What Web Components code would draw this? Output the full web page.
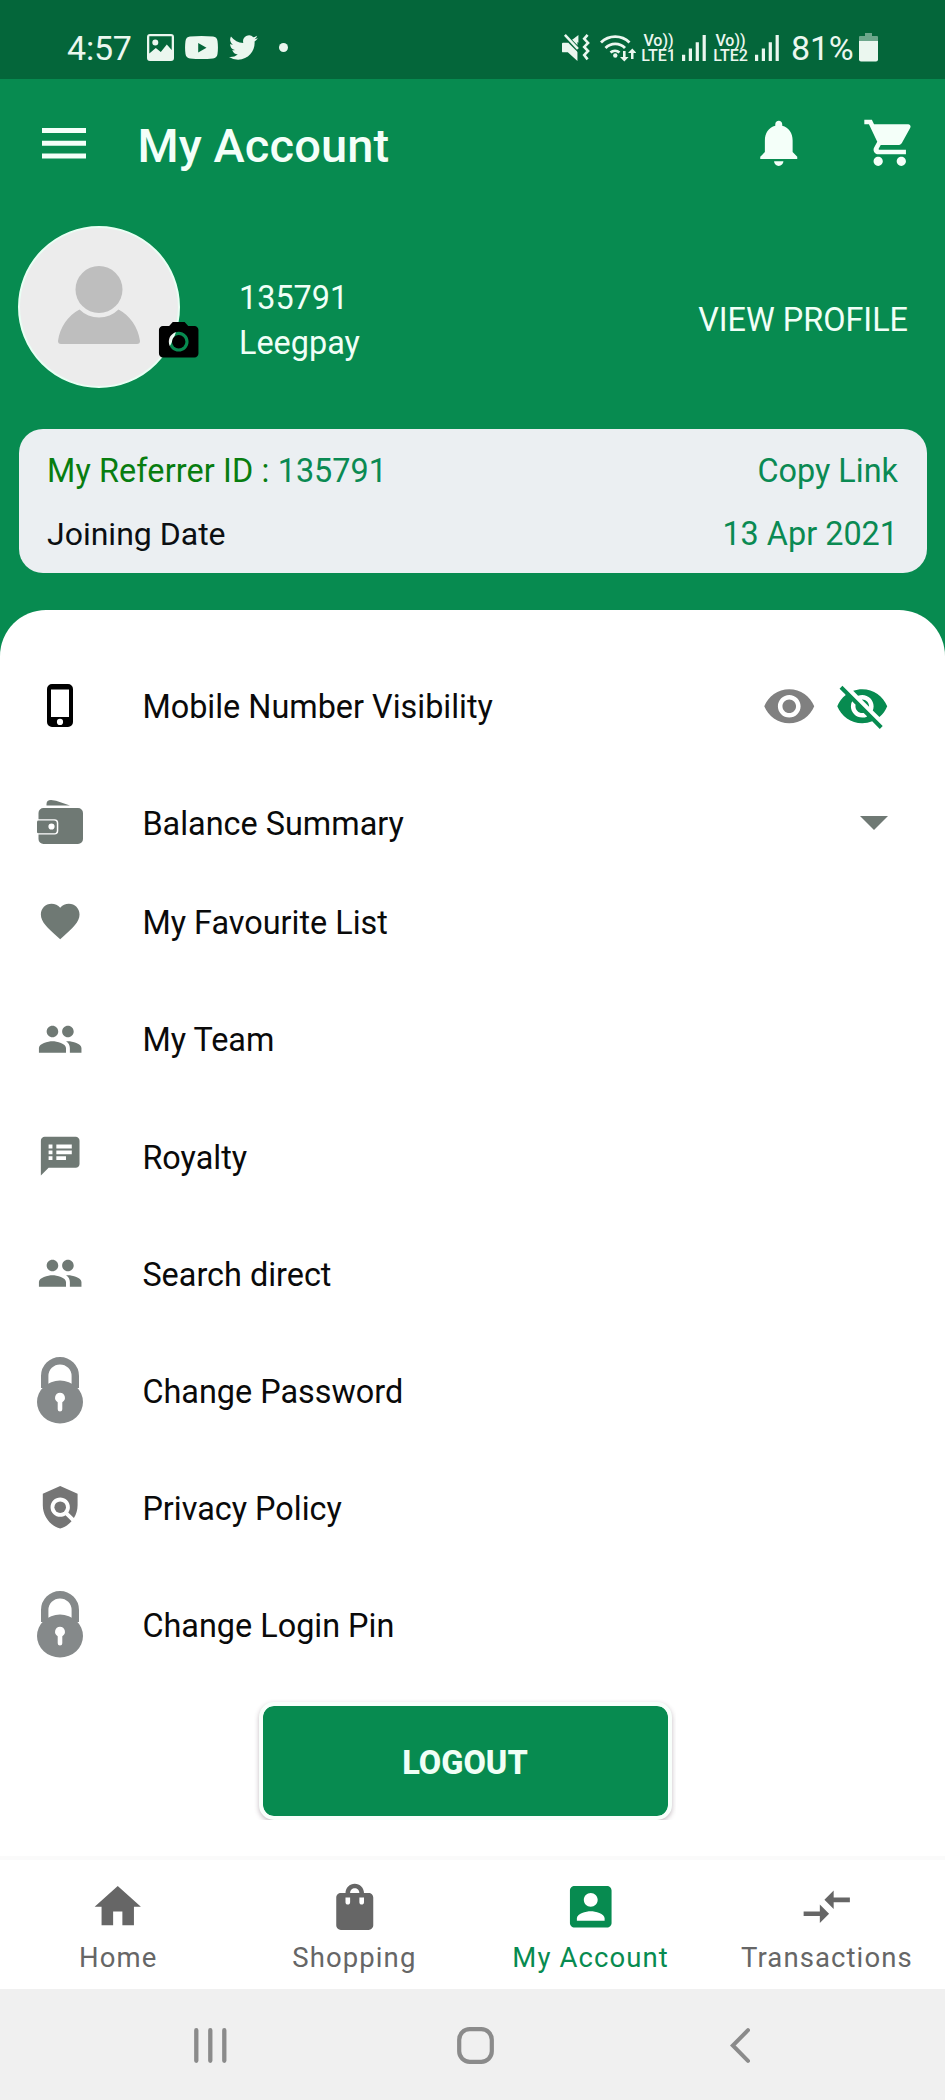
<!DOCTYPE html>
<html lang="en">
<head>
<meta charset="utf-8">
<meta name="viewport" content="width=device-width, initial-scale=1">
<title>My Account</title>
<style>
    html, body {
        margin: 0;
        padding: 0;
    }
    body {
        width: 945px;
        height: 2100px;
        overflow: hidden;
        background: #fff;
        font-family: Roboto, "Liberation Sans", sans-serif;
        --green: #078b50;
        --grey: #6f7974;
    }
</style>
</head>
<body>
<account-screen></account-screen>

<script>
(function() {
    // Material icons use a 24x24 viewBox, the rest carry their own
    const ICONS = {
        bell: ['0 0 24 24', '<path d="M12 22c1.1 0 2-.9 2-2h-4c0 1.1.89 2 2 2zm6-6v-5c0-3.07-1.64-5.64-4.5-6.32V4c0-.83-.67-1.5-1.5-1.5s-1.5.67-1.5 1.5v.68C7.63 5.36 6 7.92 6 11v5l-2 2v1h16v-1l-2-2z"/>'],
        cart: ['0 0 24 24', '<path d="M7 18c-1.1 0-1.99.9-1.99 2S5.9 22 7 22s2-.9 2-2-.9-2-2-2zM1 2v2h2l3.6 7.59-1.35 2.45c-.16.28-.25.61-.25.96 0 1.1.9 2 2 2h12v-2H7.42c-.14 0-.25-.11-.25-.25l.03-.12.9-1.63h7.45c.75 0 1.41-.41 1.75-1.03l3.58-6.49c.08-.14.12-.31.12-.48 0-.55-.45-1-1-1H5.21l-.94-2H1zm16 16c-1.1 0-1.99.9-1.99 2s.89 2 1.99 2 2-.9 2-2-.9-2-2-2z"/>'],
        burger: ['0 0 44 31', '<path d="M0 0h44v5H0zM0 12.7h44v5H0zM0 25.4h44v5H0z"/>'],
        camera: ['0 0 24 24', '<circle cx="12" cy="12" r="3.4"/><path d="M9 2 7.17 4H4c-1.1 0-2 .9-2 2v12c0 1.1.9 2 2 2h16c1.1 0 2-.9 2-2V6c0-1.1-.9-2-2-2h-3.17L15 2H9zm3 15c-2.76 0-5-2.24-5-5s2.24-5 5-5 5 2.24 5 5-2.24 5-5 5z"/>'],
        phone: ['0 0 26 43', '<path fill-rule="evenodd" d="M5 0h16a5 5 0 0 1 5 5v33a5 5 0 0 1-5 5H5a5 5 0 0 1-5-5V5a5 5 0 0 1 5-5zM4 5.5v27.5h18V5.5zM13 34.8a3.1 3.1 0 1 0 0 6.2 3.1 3.1 0 0 0 0-6.2z"/>'],
        wallet: ['0 0 46 44', '<path d="M9.5 5.5V4Q9.5 0 14 0L19 .8 33 5.5z"/><path fill-rule="evenodd" d="M6.5 8H41a5 5 0 0 1 5 5v26a5 5 0 0 1-5 5H6.5a5 5 0 0 1-5-5V34.5H17.5a3.8 3.8 0 0 0 3.8-3.8V23a3.8 3.8 0 0 0-3.8-3.8H1.5V13a5 5 0 0 1 5-5z"/><path fill-rule="evenodd" d="M1.5 20.6H17a2.8 2.8 0 0 1 2.8 2.8v7a2.8 2.8 0 0 1-2.8 2.8H1.5A1.5 1.5 0 0 1 0 31.5V22a1.5 1.5 0 0 1 1.5-1.4zM14.5 23.4a3.1 3.1 0 1 0 0 6.2 3.1 3.1 0 0 0 0-6.2z"/>'],
        heart: ['0 0 24 24', '<path d="m12 21.35-1.45-1.32C5.4 15.36 2 12.28 2 8.5 2 5.42 4.42 3 7.5 3c1.74 0 3.41.81 4.5 2.09C13.09 3.81 14.76 3 16.5 3 19.58 3 22 5.42 22 8.5c0 3.78-3.4 6.86-8.55 11.54L12 21.35z"/>'],
        people: ['0 0 24 24', '<path d="M16 11c1.66 0 2.99-1.34 2.99-3S17.66 5 16 5s-3 1.34-3 3 1.34 3 3 3zm-8 0c1.66 0 2.99-1.34 2.99-3S9.66 5 8 5 5 6.34 5 8s1.34 3 3 3zm0 2c-2.33 0-7 1.17-7 3.5V19h14v-2.5c0-2.33-4.67-3.5-7-3.5zm8 0c-.29 0-.62.02-.97.05 1.16.84 1.97 1.97 1.97 3.45V19h6v-2.5c0-2.33-4.67-3.5-7-3.5z"/>'],
        notes: ['0 0 24 24', '<path d="M20 2H4c-1.1 0-1.99.9-1.99 2L2 22l4-4h14c1.1 0 2-.9 2-2V4c0-1.1-.9-2-2-2zM8 14H6v-2h2v2zm0-3H6V9h2v2zm0-3H6V6h2v2zm7 6H10v-2h5v2zm3-3h-8V9h8v2zm0-3h-8V6h8v2z"/>'],
        lock: ['0 0 46 66.5', '<path d="M7.7 31V19a15.3 15.3 0 0 1 30.6 0v12" fill="none" stroke="currentColor" stroke-width="7.4"/><path fill-rule="evenodd" d="M23 23.5a23 21.5 0 1 0 0 43 23 21.5 0 0 0 0-43zm0 12.3a5 5 0 0 1 2.3 9.4v7a2.3 2.3 0 0 1-4.6 0v-7A5 5 0 0 1 23 35.8z"/>'],
        policy: ['0 0 24 24', '<path d="m21 5-9-4-9 4v6c0 5.55 3.84 10.74 9 12 2.3-.56 4.33-1.9 5.88-3.71l-3.12-3.12c-1.94 1.29-4.58 1.07-6.29-.64-1.95-1.95-1.95-5.12 0-7.07 1.95-1.95 5.12-1.95 7.07 0 1.71 1.71 1.92 4.35.64 6.29l2.9 2.9C20.29 15.69 21 13.38 21 11V5z"/><circle cx="12" cy="12" r="3"/>'],
        eye: ['0 0 24 24', '<path d="M12 4.5C7 4.5 2.73 7.61 1 12c1.73 4.39 6 7.5 11 7.5s9.27-3.11 11-7.5c-1.73-4.39-6-7.5-11-7.5zM12 17c-2.76 0-5-2.24-5-5s2.24-5 5-5 5 2.24 5 5-2.24 5-5 5zm0-8c-1.66 0-3 1.34-3 3s1.34 3 3 3 3-1.34 3-3-1.34-3-3-3z"/>'],
        'eye-off': ['0 0 24 24', '<path d="M12 7c2.76 0 5 2.24 5 5 0 .65-.13 1.26-.36 1.83l2.92 2.92c1.51-1.26 2.7-2.89 3.43-4.75-1.73-4.39-6-7.5-11-7.5-1.4 0-2.74.25-3.98.7l2.16 2.16C10.74 7.13 11.35 7 12 7zM2 4.27l2.28 2.28.46.46C3.08 8.3 1.78 10.02 1 12c1.73 4.39 6 7.5 11 7.5 1.55 0 3.03-.3 4.38-.84l.42.42L19.73 22 21 20.73 3.27 3 2 4.27zM7.53 9.8l1.55 1.55c-.05.21-.08.43-.08.65 0 1.66 1.34 3 3 3 .22 0 .44-.03.65-.08l1.55 1.55c-.67.33-1.41.53-2.2.53-2.76 0-5-2.24-5-5 0-.79.2-1.53.53-2.2zm4.31-.78 3.15 3.15.02-.16c0-1.66-1.34-3-3-3l-.17.01z"/>'],
        caret: ['0 0 28 14', '<path d="M0 0h28L14 14z"/>'],
        home: ['0 0 24 24', '<path d="M10 20v-6h4v6h5v-8h3L12 3 2 12h3v8z"/>'],
        bag: ['0 0 24 24', '<path d="M18 6h-2c0-2.21-1.79-4-4-4S8 3.79 8 6H6c-1.1 0-2 .9-2 2v12c0 1.1.9 2 2 2h12c1.1 0 2-.9 2-2V8c0-1.1-.9-2-2-2zm-8 4c0 .55-.45 1-1 1s-1-.45-1-1V8h2v2zm2-6c1.1 0 2 .9 2 2h-4c0-1.1.9-2 2-2zm4 6c0 .55-.45 1-1 1s-1-.45-1-1V8h2v2z"/>'],
        account: ['0 0 24 24', '<path d="M3 5v14c0 1.1.89 2 2 2h14c1.1 0 2-.9 2-2V5c0-1.1-.9-2-2-2H5c-1.11 0-2 .9-2 2zm12 4c0 1.66-1.34 3-3 3s-3-1.34-3-3 1.34-3 3-3 3 1.34 3 3zm-9 8c0-2 4-3.1 6-3.1s6 1.1 6 3.1v1H6v-1z"/>'],
        arrows: ['0 0 24 24', '<path d="M9.01 14H2v2h7.01v3L13 15l-3.99-4v3zm5.98-1v-3H22V8h-7.01V5L11 9l3.99 4z"/>'],
        image: ['0 0 27 27', '<path fill-rule="evenodd" d="M3 0h21a3 3 0 0 1 3 3v21a3 3 0 0 1-3 3H3a3 3 0 0 1-3-3V3a3 3 0 0 1 3-3zM2.3 2.3v17.2l6.5-5.5 5 4 6-7.5 4.9 5.5V2.3zM8.3 5.5a3 3 0 1 1 0 6 3 3 0 0 1 0-6z"/>'],
        youtube: ['0 0 33 23', '<path fill-rule="evenodd" d="M5 .6Q16.5-.6 28 .6q4 .4 4.5 4.4.9 6.5 0 13-.5 4-4.5 4.4-11.5 1.2-23 0-4-.4-4.5-4.4-.9-6.5 0-13Q1 1 5 .6zM13.2 7v9.4l8.3-4.7z"/>'],
        twitter: ['0 0 24 20', '<path d="M23.95 2.6a10 10 0 0 1-2.82.77 4.96 4.96 0 0 0 2.16-2.72c-.95.55-2 .96-3.13 1.18a4.92 4.92 0 0 0-8.38 4.48A13.93 13.93 0 0 1 1.64 1.16a4.92 4.92 0 0 0 1.52 6.57 4.9 4.9 0 0 1-2.23-.61v.06a4.92 4.92 0 0 0 3.95 4.83 5 5 0 0 1-2.21.08 4.94 4.94 0 0 0 4.6 3.42A9.87 9.87 0 0 1 0 17.54a13.99 13.99 0 0 0 7.55 2.21c9.14 0 14.3-7.72 13.6-14.5a10 10 0 0 0 2.8-2.65z"/>'],
        mute: ['0 0 29 29', '<path d="M1 9h5l10-7v26L6 19H1a1 1 0 0 1-1-1v-8a1 1 0 0 1 1-1zM12 5l5-4v8z"/><path d="M2 1l17 17" stroke="#04663a" stroke-width="5"/><path d="M3 1l13.5 14.5" stroke="currentColor" stroke-width="2.6"/><path d="M26.5 1l-3.5 4 4 4.2-4 4.2 4 4.2-4 4.2 3.5 4.5" fill="none" stroke="currentColor" stroke-width="2.7"/>'],
        wifi: ['0 0 36 28', '<g fill="none" stroke="currentColor" stroke-width="2.8"><path d="M1 8.5a20 20 0 0 1 28.5 0M5.5 14a13.5 13.5 0 0 1 19.5 0M10.5 18.5a7 7 0 0 1 9 0"/></g><circle cx="15.3" cy="21.5" r="2.2"/><path d="M23 17h2.6v6h3l-4.3 4.5L20 23h3zM31 25V19h-3l4.3-4.5L36.5 19h-3v6z"/>'],
        signal: ['0 0 24 27', '<path d="M0 20.5h3.2V27H0zM6.8 14H10v13H6.8zM13.7 7.5h3.2V27h-3.2zM20.6 0h3.2v27h-3.2z"/>'],
        battery: ['0 0 19 29', '<path opacity=".45" d="M6 0h7v3h5a1 1 0 0 1 1 1v5H0V4a1 1 0 0 1 1-1h5z"/><path d="M0 8h19v18.5a2 2 0 0 1-2 2H2a2 2 0 0 1-2-2z"/>'],
        recents: ['0 0 33 35', '<path d="M2.3 2.2v30.6M16.3 2.2v30.6M30.3 2.2v30.6" stroke="currentColor" stroke-width="4.3" stroke-linecap="round"/>'],
        'nav-home': ['0 0 37 37', '<rect x="2.2" y="2.2" width="32.6" height="32.6" rx="10.5" fill="none" stroke="currentColor" stroke-width="4.2"/>'],
        back: ['0 0 20 35', '<path d="M18 2.2 2.8 17.5 18 32.8" fill="none" stroke="currentColor" stroke-width="4" stroke-linecap="round"/>'],
        person: ['0 0 82 78', '<circle cx="41" cy="23.5" r="23.5"/><path d="M21.5 43.5a27.5 27.5 0 0 0 39 0C72 49.5 80 61 82 75q0 3-3 3H3q-3 0-3-3C2 61 10 49.5 21.5 43.5z"/>']
    };

    // Small helper: define an element from its markup
    function define(name, html, init) {
        const template = document.createElement('template');
        template.innerHTML = html;

        window.customElements.define(name, class extends HTMLElement {
            constructor() {
                super();
                this.attachShadow({mode: 'open'});
                this.shadowRoot.appendChild(template.content.cloneNode(true));
            }

            connectedCallback() {
                if (init)
                    init.call(this, this.shadowRoot);
            }
        });
    }

    // <app-icon name w h>
    define('app-icon', `
        <style>
          :host {
            display: block;
            flex: none;
          }
          svg {
            display: block;
            width: 100%;
            height: 100%;
            fill: currentColor;
          }
        </style>
        <svg aria-hidden="true"></svg>
    `, function(root) {
        const icon = ICONS[this.getAttribute('name')];
        const svg = root.querySelector('svg');
        const w = this.getAttribute('w');
        svg.setAttribute('viewBox', icon[0]);
        svg.setAttribute('preserveAspectRatio', 'none');
        svg.innerHTML = icon[1];
        this.style.width = w + 'px';
        this.style.height = (this.getAttribute('h') || w) + 'px';
    });

    define('volte-badge', `
        <style>
          :host {
            display: block;
            width: 35px;
            font-size: 16px;
            line-height: 15px;
            font-weight: 500;
            text-align: center;
            white-space: nowrap;
          }
        </style>
        <div>Vo))</div>
        <div><slot></slot></div>
    `);

    define('status-bar', `
        <style>
          :host {
            display: flex;
            align-items: center;
            box-sizing: border-box;
            height: 79px;
            padding: 16px 67px 0 67px;
            background: #04663a;
            color: #ebf7ef;
            font-size: 34px;
            line-height: 40px;
          }
          .time {
            width: 80px;
            letter-spacing: -0.2px;
          }
          .left, .right {
            display: flex;
            align-items: center;
          }
          .right {
            margin-left: auto;
          }
          .dot {
            width: 9px;
            height: 9px;
            border-radius: 50%;
            background: currentColor;
            margin-left: 21px;
          }
          .percent {
            margin-left: 12px;
            width: 68px;
            letter-spacing: -0.2px;
            white-space: nowrap;
          }
        </style>
        <div class="left">
          <span class="time">4:57</span>
          <app-icon name="image" w="27"></app-icon>
          <app-icon name="youtube" w="33" h="23" style="margin-left:11px"></app-icon>
          <app-icon name="twitter" w="29" h="25" style="margin-left:11px"></app-icon>
          <span class="dot"></span>
        </div>
        <div class="right">
          <app-icon name="mute" w="28"></app-icon>
          <app-icon name="wifi" w="36" h="28" style="margin-left:10px"></app-icon>
          <volte-badge style="margin-left:5px">LTE1</volte-badge>
          <app-icon name="signal" w="24" h="26" style="margin-left:6px"></app-icon>
          <volte-badge style="margin-left:7px">LTE2</volte-badge>
          <app-icon name="signal" w="24" h="26" style="margin-left:7px"></app-icon>
          <span class="percent">81%</span>
          <app-icon name="battery" w="19" h="29"></app-icon>
        </div>
    `);

    define('app-header', `
        <style>
          :host {
            display: flex;
            align-items: center;
            height: 128px;
            padding: 0 28px 0 42px;
            color: #f4fff9;
          }
          h1 {
            flex: 1;
            margin: 5px 0 0 51.5px;
            font-size: 47px;
            line-height: 54px;
            font-weight: 500;
            letter-spacing: 0.1px;
          }
        </style>
        <app-icon name="burger" w="44" h="31"></app-icon>
        <h1><slot></slot></h1>
        <app-icon name="bell" w="55.5"></app-icon>
        <app-icon name="cart" w="55.5" style="margin-left:55.5px"></app-icon>
    `);

    define('user-avatar', `
        <style>
          :host {
            display: flex;
            justify-content: center;
            position: relative;
            box-sizing: border-box;
            width: 162px;
            height: 162px;
            padding-top: 38px;
            border: 2px solid #e9fff4;
            border-radius: 50%;
            background: #ececec;
            color: #bebebe;
          }
          /* camera badge lies over the circle's edge */
          .badge {
            position: absolute;
            left: 135px;
            top: 90px;
            color: #000;
          }
        </style>
        <app-icon name="person" w="82" h="78"></app-icon>
        <app-icon class="badge" name="camera" w="47.4"></app-icon>
    `);

    define('profile-summary', `
        <style>
          :host {
            display: flex;
            align-items: center;
            height: 162px;
            margin-top: 19px;
            padding: 0 37px 0 18px;
            color: #f0fff7;
            font-size: 32.4px;
          }
          .who {
            flex: 1;
            margin: 28px 0 0 59px;
            line-height: 44.7px;
          }
          .link {
            margin-top: 26px;
          }
        </style>
        <user-avatar></user-avatar>
        <div class="who">
          <div><slot name="id"></slot></div>
          <div><slot name="name"></slot></div>
        </div>
        <div class="link">VIEW PROFILE</div>
    `);

    define('referrer-card', `
        <style>
          :host {
            display: block;
            box-sizing: border-box;
            height: 144px;
            margin: 41px 18.5px 0;
            padding: 11px 28.5px 0 28.5px;
            border-radius: 24px;
            background: #ebeff2;
            color: #0a8a53;
            font-size: 32.4px;
          }
          .row {
            display: flex;
            justify-content: space-between;
            line-height: 63px;
          }
          .name {
            color: #087d10;
            letter-spacing: 0.12px;
          }
          .dark {
            color: #0b0f12;
            font-size: 32px;
          }
        </style>
        <div class="row">
          <span><span class="name">My Referrer ID : </span><slot name="id"></slot></span>
          <span>Copy Link</span>
        </div>
        <div class="row">
          <span class="dark">Joining Date</span>
          <slot name="date"></slot>
        </div>
    `);

    define('menu-item', `
        <style>
          :host {
            display: flex;
            align-items: center;
            height: 117.2px;
            padding-right: 57px;
            color: #0a0a0a;
            font-size: 32.4px;
          }
          .icon {
            display: flex;
            justify-content: center;
            width: 119.4px;
            margin-right: 23px;
            margin-top: -2px;
            color: var(--icon-color, var(--grey));
          }
          .label {
            flex: 1;
            padding-top: 1.4px;
          }
          .actions {
            display: flex;
            align-items: center;
            gap: 19px;
          }
        </style>
        <div class="icon"></div>
        <div class="label"><slot></slot></div>
        <div class="actions"><slot name="action"></slot></div>
    `, function(root) {
        const icon = document.createElement('app-icon');
        icon.setAttribute('name', this.getAttribute('icon'));
        icon.setAttribute('w', this.getAttribute('w') || 46.4);
        if (this.hasAttribute('h'))
            icon.setAttribute('h', this.getAttribute('h'));
        root.querySelector('.icon').replaceChildren(icon);
    });

    define('logout-button', `
        <style>
          :host {
            display: block;
            width: 422px;
            height: 124px;
            margin: 12px 0 0 254px;
            overflow: hidden;
          }
          button {
            display: block;
            box-sizing: border-box;
            width: 413px;
            height: 118px;
            margin: 6px 4.5px 0;
            padding: 3.5px 0 0;
            border: 4px solid #f8fffb;
            border-radius: 15px;
            background: var(--green);
            background-clip: padding-box;
            box-shadow: 0 2px 5px rgba(60, 30, 50, .3);
            color: #f0fff6;
            font: 800 32.5px Roboto, "Liberation Sans", sans-serif;
          }
        </style>
        <button><slot></slot></button>
    `);

    define('tab-item', `
        <style>
          :host {
            display: flex;
            flex-direction: column;
            align-items: center;
            flex: 1;
            color: #666;
            font-size: 27.5px;
            line-height: 32px;
            letter-spacing: 1.1px;
          }
          :host([active]) {
            color: var(--green);
          }
          div {
            margin-top: 7.5px;
          }
        </style>
        <span></span>
        <div><slot></slot></div>
    `, function(root) {
        root.querySelector('span').innerHTML = `<app-icon name="${this.getAttribute('icon')}" w="55.5"></app-icon>`;
    });

    define('tab-bar', `
        <style>
          :host {
            display: flex;
            box-sizing: border-box;
            height: 133.5px;
            padding-top: 19px;
            border-top: 4px solid #fafafa;
            background: #fff;
          }
        </style>
        <slot></slot>
    `);

    define('system-nav', `
        <style>
          :host {
            display: flex;
            align-items: center;
            box-sizing: border-box;
            height: 110.5px;
            padding: 2px 195px 0 194px;
            justify-content: space-between;
            background: #f0f0f0;
            color: #8b8b8b;
          }
        </style>
        <app-icon name="recents" w="33" h="35"></app-icon>
        <app-icon name="nav-home" w="37" style="margin-left:-7px"></app-icon>
        <app-icon name="back" w="20" h="35"></app-icon>
    `);

    define('account-screen', `
        <style>
          :host {
            display: flex;
            flex-direction: column;
            height: 2100px;
            background: var(--green);
          }
          main {
            box-sizing: border-box;
            height: 1246.3px;
            margin-top: 36.7px;
            padding-top: 37.9px;
            border-radius: 46px 46px 0 0;
            background: #fff;
          }
          .phone {
            --icon-color: #000;
          }
          .balance {
            margin-bottom: -18px;
          }
          .eye {
            color: #808080;
          }
          .eye.off {
            margin-right: -1.5px;
            color: var(--green);
          }
          .caret {
            color: var(--grey);
          }
          .lock {
            --icon-color: #85898a;
          }
          .policy {
            --icon-color: #757575;
          }
        </style>
        <status-bar></status-bar>
        <app-header>My Account</app-header>
        <profile-summary>
          <span slot="id">135791</span>
          <span slot="name">Leegpay</span>
        </profile-summary>
        <referrer-card>
          <span slot="id">135791</span>
          <span slot="date">13 Apr 2021</span>
        </referrer-card>
        <main>
          <menu-item class="phone" icon="phone" w="26" h="43">Mobile Number Visibility
            <app-icon class="eye" slot="action" name="eye" w="54.5"></app-icon>
            <app-icon class="eye off" slot="action" name="eye-off" w="54.5"></app-icon>
          </menu-item>
          <menu-item class="balance" icon="wallet" w="46" h="44">Balance Summary
            <app-icon class="caret" slot="action" name="caret" w="28" h="14"></app-icon>
          </menu-item>
          <menu-item icon="heart">My Favourite List</menu-item>
          <menu-item icon="people">My Team</menu-item>
          <menu-item icon="notes">Royalty</menu-item>
          <menu-item icon="people">Search direct</menu-item>
          <menu-item class="lock" icon="lock" w="46" h="66.5">Change Password</menu-item>
          <menu-item class="policy" icon="policy">Privacy Policy</menu-item>
          <menu-item class="lock" icon="lock" w="46" h="66.5">Change Login Pin</menu-item>
          <logout-button>LOGOUT</logout-button>
        </main>
        <tab-bar>
          <tab-item icon="home">Home</tab-item>
          <tab-item icon="bag">Shopping</tab-item>
          <tab-item icon="account" active>My Account</tab-item>
          <tab-item icon="arrows">Transactions</tab-item>
        </tab-bar>
        <system-nav></system-nav>
    `);
})();
</script>
</body>
</html>
